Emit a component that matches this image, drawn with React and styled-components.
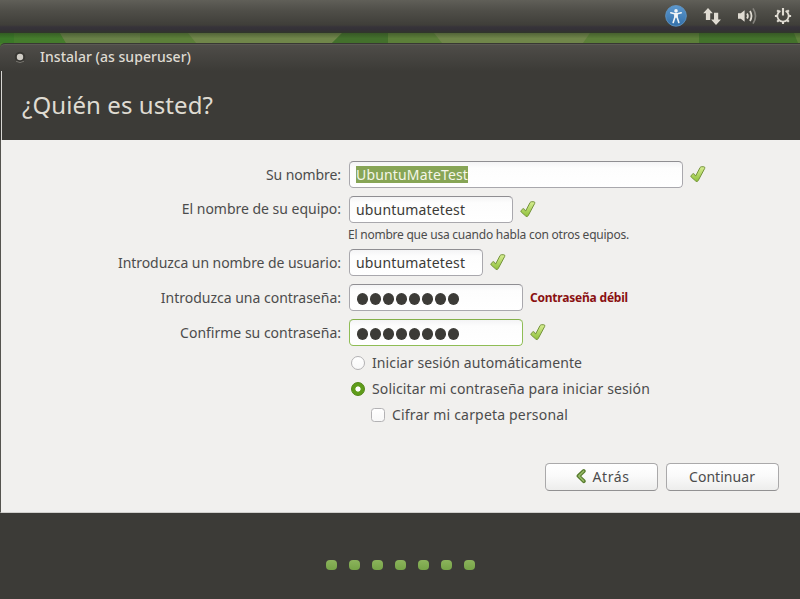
import React from 'react';
import styled, { createGlobalStyle, css } from 'styled-components';

const GlobalStyle = createGlobalStyle`
  * { box-sizing: border-box; }
  body {
    margin: 0;
    overflow: hidden;
    font-family: "Noto Sans", "Open Sans", sans-serif;
    font-size: 14px;
    color: #4c4c4c;
  }
`;

const Desktop = styled.div`
  display: flex;
  flex-direction: column;
  width: 800px;
  height: 599px;
  overflow: hidden;
  background: #3c3b37;
`;

const TopPanel = styled.header`
  display: flex;
  flex: none;
  justify-content: flex-end;
  height: 33px;
  padding: 4px 7px 0 0;
  background: linear-gradient(#605f58 0, #504f49 10px, #3f3e39 25px, #36333a 27px, #343136 30px, #30372a 33px);
`;

const Tray = styled.div`
  display: flex;
  align-items: center;
  height: 24px;
`;

const TrayIcon = styled.svg`
  display: block;
  margin-left: ${(p) => p.$gap || 0}px;
`;

const Wallpaper = styled.svg`
  display: block;
  flex: none;
`;

const Window = styled.main`
  display: flex;
  flex: 1;
  flex-direction: column;
  background: linear-gradient(#457c2c 5px, #3c3b37 5px);
`;

const TitleBar = styled.div`
  display: flex;
  align-items: center;
  flex: none;
  height: 28px;
  padding: 0 0 2px 14px;
  gap: 14px;
  border-top: 1px solid #383833;
  border-radius: 5px 0 0 0;
  box-shadow: inset 0 1px #5a5953;
  background: linear-gradient(#4f4d49, #3c3b37);
  color: #dfdbd2;
  font-weight: 500;
  line-height: 20px;
  letter-spacing: 0.035px;
`;

const Heading = styled.h1`
  flex: none;
  height: 69px;
  margin: 0;
  padding-left: 20px;
  border-left: 2px solid #383733;
  border-image: linear-gradient(90deg, #33322f 1px, #d8d7d3 1px) 2;
  background: #3c3b37;
  color: #dfdbd2;
  font-size: 24px;
  font-weight: 400;
  line-height: 67px;
  letter-spacing: 0.08px;
`;

const Content = styled.section`
  display: flex;
  flex-direction: column;
  flex: none;
  height: 373px;
  padding: 21px 21px 0 0;
  border-left: 1px solid #55544f;
  border-bottom: 1px solid #d0cfcc;
  background: #f1f0ee;
`;

const Form = styled.div`
  display: grid;
  grid-template-columns: 340px 1fr;
  column-gap: 8px;
  grid-template-rows: 27px 27px 10px 27px 27px 27px;
  row-gap: 8px;
`;

const Label = styled.label`
  line-height: ${(p) => (p.$raised ? 25 : 27)}px;
  text-align: right;
  white-space: nowrap;
  letter-spacing: ${(p) => p.$spacing || 0}px;
`;

const Field = styled.div`
  display: flex;
  align-items: center;
  gap: 7px;
`;

const Input = styled.div`
  display: flex;
  align-items: center;
  width: ${(p) => p.$width}px;
  height: 27px;
  padding-left: 6px;
  border: 1px solid ${(p) => (p.$focused ? '#8fbd55' : '#a9a8ad')};
  border-top-color: ${(p) => (p.$focused ? '#84b04a' : '#8f8e92')};
  border-radius: 4.5px;
  background: linear-gradient(#f4f4f5, #fdfdfd 6px, #ffffff);
  color: #3c3b37;
  letter-spacing: 0.16px;
`;

const Selection = styled.span`
  height: 17px;
  background: #87a556;
  color: #f4f6e8;
  line-height: 17px;
`;

const Bullets = styled.div`
  display: flex;
  gap: 2px;
  padding: 3px 0 0 1px;
`;

const Bullet = styled.i`
  width: 11px;
  height: 11.5px;
  border-radius: 50%;
  background: #3c3b37;
`;

const Hint = styled.p`
  grid-column: 2;
  margin: -2px 0 0 -1px;
  font-size: 12px;
  line-height: 12px;
  letter-spacing: -0.23px;
  white-space: nowrap;
`;

const Warning = styled.strong`
  color: #8a1011;
  font-size: 12px;
  font-weight: 700;
  letter-spacing: -0.21px;
`;

const Options = styled.div`
  display: flex;
  flex-direction: column;
  padding: 4px 0 0 350px;
`;

const Option = styled.div`
  display: flex;
  align-items: center;
  height: 26px;
  padding-left: ${(p) => (p.$nested ? 20 : 0)}px;
  gap: 7px;
  letter-spacing: ${(p) => p.$spacing}px;
`;

const Caption = styled.span`
  padding-bottom: 2px;
`;

const Mark = styled.span`
  width: 14px;
  height: 14px;
  border: 1px solid #b3b2b4;
  border-radius: ${(p) => (p.$square ? '3.5px' : '50%')};
  background: linear-gradient(#ffffff, #f8f8f8);
  ${(p) =>
    p.$checked &&
    css`
      border-color: #4f8512;
      background: radial-gradient(circle, #fff 0 2.2px, #5f9c1a 3px);
    `}
`;

const Actions = styled.div`
  display: flex;
  justify-content: flex-end;
  gap: 8px;
  margin-top: 35px;
`;

const Button = styled.button`
  display: flex;
  align-items: center;
  justify-content: center;
  width: 113px;
  height: 28px;
  padding: 0 1px 0 ${(p) => p.$indent || 0}px;
  gap: 6px;
  border: 1px solid #aaa9aa;
  border-bottom-color: #929192;
  border-radius: 4.5px;
  background: linear-gradient(#ffffff, #fafafa 45%, #ededec);
  color: #4c4c4c;
  font: inherit;
  letter-spacing: ${(p) => p.$spacing}px;
`;

const Progress = styled.footer`
  display: flex;
  justify-content: center;
  gap: 12px;
  padding-top: 47px;
`;

const Step = styled.i`
  width: 11px;
  height: 10px;
  border-radius: 4px;
  background: linear-gradient(#8cb45c, #76a447);
`;

function CheckIcon() {
  return (
    <svg width="16" height="18" viewBox="0 0 16 18">
      <defs>
        <linearGradient id="check" x1="0" y1="0" x2="0" y2="1">
          <stop offset="0" stopColor="#d8ee93" />
          <stop offset="1" stopColor="#8fc13a" />
        </linearGradient>
      </defs>
      <path
        d="M1.2 9.4 L2.9 7.8 Q3.9 7.3 4.5 8.3 L5.6 10.1 L10.1 1.5 Q10.7 .7 11.7 .7 L13.9 .8 Q15.4 1.1 14.7 2.4 L8.3 14.4 Q7.3 16.5 5.7 15 L1.2 11 Q.4 10.2 1.2 9.4 Z"
        fill="url(#check)"
        stroke="#75933c"
        strokeWidth="1"
        strokeLinejoin="round"
      />
    </svg>
  );
}

function BackIcon() {
  return (
    <svg width="10" height="19" viewBox="0 0 10 19">
      <path d="M7.8 3 L2.5 8 L7.8 13.2" fill="none" stroke="#567b2c" strokeWidth="3.8" strokeLinecap="round" strokeLinejoin="round" />
      <path d="M7.6 3.2 L2.8 8 L7.6 13" fill="none" stroke="#98bb68" strokeWidth="1.6" strokeLinecap="round" strokeLinejoin="round" />
    </svg>
  );
}

function CloseIcon() {
  return (
    <svg width="12" height="14" viewBox="0 0 12 14">
      <circle cx="6" cy="7" r="5.3" fill="#373632" />
      <path d="M2 11.2 Q6 14 10 11.2" fill="none" stroke="#77756f" strokeWidth="1" />
      <circle cx="6" cy="7" r="3.2" fill="#cfccc5" />
    </svg>
  );
}

function StatusIcons() {
  return (
    <Tray>
      <TrayIcon width="24" height="24" viewBox="0 0 24 24">
        <defs>
          <linearGradient id="access" x1="0" y1="0" x2="0" y2="1">
            <stop offset="0" stopColor="#5c98ce" />
            <stop offset="1" stopColor="#336fa9" />
          </linearGradient>
        </defs>
        <circle cx="12" cy="11.8" r="10.4" fill="url(#access)" stroke="#6297c5" strokeWidth=".8" />
        <circle cx="12" cy="6.9" r="1.8" fill="#f2f5f7" />
        <path d="M6.8 8.8 L10.5 9.8 H13.5 L17.2 8.8 M12 9.8 V13 M10.9 10 V13.2 L9.2 18.5 M13.1 10 V13.2 L14.8 18.5" fill="none" stroke="#f2f5f7" strokeWidth="1.6" strokeLinecap="round" />
      </TrayIcon>
      <TrayIcon $gap={14} width="20" height="20" viewBox="0 0 20 20">
        <path
          d="M6 2 L10.8 7.2 H8.2 V14 H3.9 V7.2 H1.2 Z M12 6.8 H16.2 V13.6 H19 L14 19 L9.1 13.6 H12 Z"
          fill="#dfdbd2"
        />
      </TrayIcon>
      <TrayIcon $gap={15} width="20" height="20" viewBox="0 0 20 20">
        <path d="M1 7.3 H3.8 L7.6 4.2 V15.8 L3.8 12.7 H1 Z" fill="#dfdbd2" />
        <path d="M10 7.4 Q11.8 10 10 12.6" fill="none" stroke="#dfdbd2" strokeWidth="1.7" />
        <path d="M13 5 Q16 10 13 15" fill="none" stroke="#dfdbd2" strokeWidth="1.8" />
        <path d="M16 2.4 Q21 10 16 17.6" fill="none" stroke="#85837d" strokeWidth="1.7" />
      </TrayIcon>
      <TrayIcon $gap={16} width="20" height="20" viewBox="0 0 20 20">
        <path d="M7.4 4.9 A5.7 5.7 0 1 0 12.6 4.9" fill="none" stroke="#dfdbd2" strokeWidth="1.8" />
        <path
          d="M10 2 V9.6 M1.9 10 H4.5 M15.5 10 H18.1 M10 15.5 V18 M4.2 4.2 L6 6 M15.8 4.2 L14 6 M4.2 15.8 L6 14 M15.8 15.8 L14 14"
          stroke="#dfdbd2"
          strokeWidth="2.1"
        />
      </TrayIcon>
    </Tray>
  );
}

function DesktopStrip() {
  return (
    <Wallpaper width="800" height="10" viewBox="0 0 800 10">
      <defs>
        <linearGradient id="shade" x1="0" y1="0" x2="0" y2="1">
          <stop offset="0" stopColor="#25321d" stopOpacity=".4" />
          <stop offset=".55" stopColor="#25321d" stopOpacity="0" />
        </linearGradient>
      </defs>
      <rect width="800" height="10" fill="#5c7f39" />
      <path d="M0 0 H60 L66 10 H0 Z" fill="#457c2c" />
      <path d="M0 0 H14 V10 H0 Z" fill="#3b7928" />
      <path d="M60 0 H140 V10 H66 Z" fill="#688047" />
      <path d="M188 0 H342 L332 10 H196 Z" fill="#70864a" />
      <path d="M342 0 H388 V10 H332 Z" fill="#43702c" />
      <path d="M434 0 H590 L583 10 H442 Z" fill="#70864a" />
      <path d="M699 0 H794 L798 10 H699 Z" fill="#43722b" />
      <rect width="800" height="10" fill="url(#shade)" />
    </Wallpaper>
  );
}

function PasswordBullets() {
  return (
    <Bullets>
      {Array.from({ length: 8 }, (_, i) => (
        <Bullet key={i} />
      ))}
    </Bullets>
  );
}

export default function App() {
  return (
    <Desktop>
      <GlobalStyle />
      <TopPanel>
        <StatusIcons />
      </TopPanel>
      <DesktopStrip />
      <Window>
        <TitleBar>
          <CloseIcon />
          Instalar (as superuser)
        </TitleBar>
        <Heading>¿Quién es usted?</Heading>
        <Content>
          <Form>
            <Label $spacing={-0.09}>Su nombre:</Label>
            <Field>
              <Input $width={334}>
                <Selection>UbuntuMateTest</Selection>
              </Input>
              <CheckIcon />
            </Field>
            <Label $spacing={-0.02} $raised>El nombre de su equipo:</Label>
            <Field>
              <Input $width={164}>ubuntumatetest</Input>
              <CheckIcon />
            </Field>
            <Hint>El nombre que usa cuando habla con otros equipos.</Hint>
            <Label $spacing={-0.06}>Introduzca un nombre de usuario:</Label>
            <Field>
              <Input $width={134}>ubuntumatetest</Input>
              <CheckIcon />
            </Field>
            <Label $spacing={-0.01}>Introduzca una contraseña:</Label>
            <Field>
              <Input $width={174}>
                <PasswordBullets />
              </Input>
              <Warning>Contraseña débil</Warning>
            </Field>
            <Label>Confirme su contraseña:</Label>
            <Field>
              <Input $width={174} $focused>
                <PasswordBullets />
              </Input>
              <CheckIcon />
            </Field>
          </Form>
          <Options>
            <Option $spacing={0.1}>
              <Mark />
              <Caption>Iniciar sesión automáticamente</Caption>
            </Option>
            <Option $spacing={0.13}>
              <Mark $checked />
              <Caption>Solicitar mi contraseña para iniciar sesión</Caption>
            </Option>
            <Option $nested $spacing={0.18}>
              <Mark $square />
              <Caption>Cifrar mi carpeta personal</Caption>
            </Option>
          </Options>
          <Actions>
            <Button $spacing={0.6} $indent={4}>
              <BackIcon />
              <Caption>Atrás</Caption>
            </Button>
            <Button $spacing={0.05}>
              <Caption>Continuar</Caption>
            </Button>
          </Actions>
        </Content>
        <Progress>
          {Array.from({ length: 7 }, (_, i) => (
            <Step key={i} />
          ))}
        </Progress>
      </Window>
    </Desktop>
  );
}
